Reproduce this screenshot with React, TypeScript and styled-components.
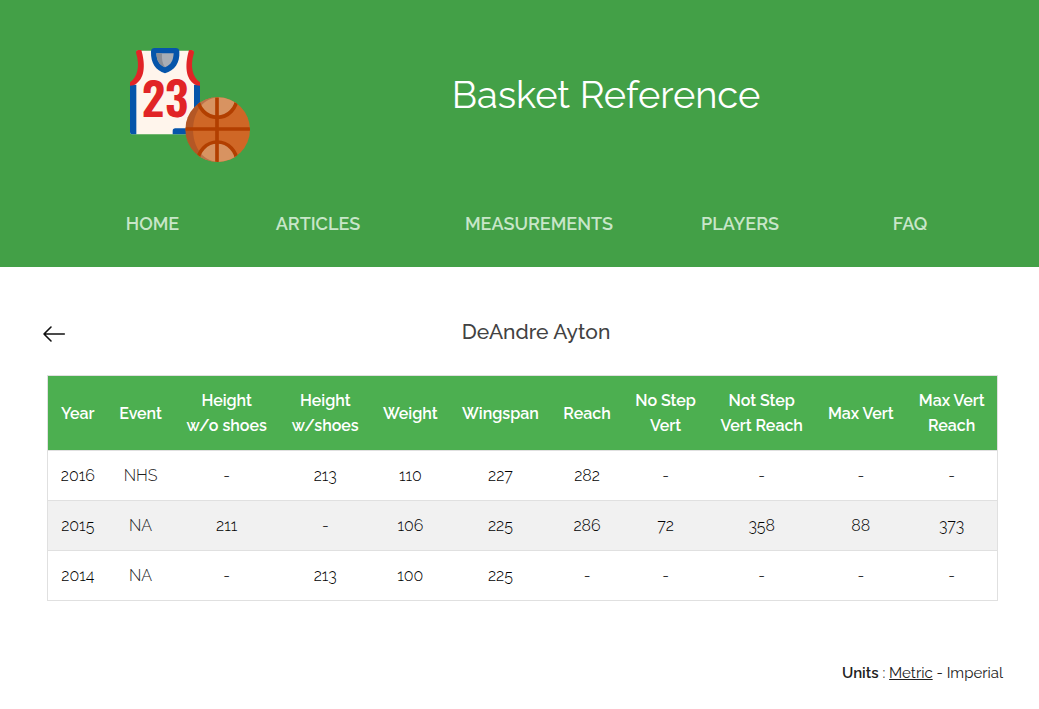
import React from "react";
import styled, { createGlobalStyle } from "styled-components";

const GlobalStyle = createGlobalStyle`
  *, *::before, *::after { box-sizing: border-box; }
  body {
    margin: 0;
    background: #fff;
    color: #212121;
    font-family: Raleway, Lato, "Open Sans", sans-serif;
    font-size: 16px;
    font-weight: 400;
    line-height: 25px;
  }
`;

const Header = styled.header`
  background: #43a047;
  padding: 48px 0 27px;
`;

const Brand = styled.div`
  display: grid;
  grid-template-columns: 380fr 452fr 207fr;
  justify-items: center;
`;

const LogoLink = styled.a`
  display: block;
  line-height: 0;
`;

const SiteTitle = styled.h1`
  margin: 0;
  padding-top: 23px;
  color: #fff;
  font-size: 38px;
  font-weight: 400;
  line-height: 48px;
  white-space: nowrap;
`;

const Nav = styled.nav`
  display: grid;
  grid-template-columns: 145fr 186fr 256fr 146fr 194fr;
  justify-items: center;
  margin-top: 46px;
  padding: 0 32px 0 80px;
`;

const NavLink = styled.a`
  color: #c8e6c9;
  font-size: 18px;
  font-weight: 600;
  line-height: 32px;
  text-decoration: none;
`;

const Main = styled.main`
  padding: 48px 36px 0 41px;
`;

const PlayerBar = styled.div`
  display: grid;
  grid-template-columns: 28px 1fr;
  align-items: end;
`;

const BackButton = styled.button`
  display: flex;
  align-items: center;
  height: 28px;
  padding: 0;
  border: 0;
  background: none;
  cursor: pointer;
`;

const PlayerName = styled.h2`
  margin: 0;
  color: #424242;
  font-size: 21px;
  font-weight: 500;
  line-height: 33px;
  text-align: center;
`;

const TableWrap = styled.div`
  margin: 27px 5px 0 6px;
`;

const Table = styled.table`
  width: 100%;
  table-layout: fixed;
  border: 1px solid #e0e0e0;
  border-collapse: collapse;
  text-align: center;
`;

const Column = styled.col<{ $share: number }>`
  width: ${(p) => (p.$share / 949) * 100}%;
`;

const HeadCell = styled.th`
  padding: 12px 0;
  background: #4caf50;
  color: #fff;
  font-weight: 600;
  white-space: pre-line;
`;

const Row = styled.tr`
  border-top: 1px solid #e0e0e0;
  &:nth-child(even) { background: #f1f1f1; }
`;

const Cell = styled.td<{ $soft?: boolean }>`
  height: 50px;
  padding: 0;
  color: ${(p) => (p.$soft ? "#212121" : "#000")};
  font-weight: 300;
`;

const Units = styled.p`
  margin: 60px 0 24px;
  font-size: 15px;
  text-align: right;
`;

const UnitsLabel = styled.span`
  font-weight: 600;
`;

const UnitLink = styled.a<{ $active?: boolean }>`
  color: inherit;
  text-decoration: ${(p) => (p.$active ? "underline" : "none")};
`;

const Logo = () => (
  <svg width="120" height="114" viewBox="30 24 360 342" aria-hidden="true">
    <path d="M50 32H220C204 70 205 112 240 134V283H38Q30 283 30 275V134C67 112 67 70 50 32Z" fill="#fff5ec" />
    <path d="M30 134H49V283H38Q30 283 30 275ZM222 134H240V220H222ZM166 265H206V283H158V273Q158 265 166 265Z" fill="#0655aa" />
    <path d="M48 38Q48 30 56 30H64C75 68 77 111 49 131Q43 137 30 137V127C52 111 61 80 48 38ZM222 38Q222 30 214 30H207C196 68 194 111 221 131Q227 137 240 137V127C218 111 209 80 222 38Z" fill="#e12426" />
    <path d="M104 24H167Q178 24 178 35C180 69 164 91 135 100C107 91 92 69 93 35Q93 24 104 24Z" fill="#0655aa" />
    <path d="M109 40H161C160 61 153 75 135 82C117 75 110 61 109 40Z" fill="#a8adb5" />
    <path d="M109 40H126C125 57 127 71 135 82C117 75 110 61 109 40Z" fill="#8a8e96" />
    <text x="135" y="232" textAnchor="middle" fill="#e12426" fontFamily='Oswald, "Roboto Condensed", "Liberation Sans", sans-serif' fontSize="138" fontWeight="600">23</text>
    <clipPath id="ball"><circle cx="293" cy="269" r="97" /></clipPath>
    <g clipPath="url(#ball)">
      <rect x="196" y="172" width="194" height="194" fill="#cf6726" />
      <ellipse cx="292" cy="171" rx="59" ry="60" fill="#d89361" />
      <ellipse cx="292" cy="367" rx="59" ry="60" fill="#d89361" />
      <path d="M293 172C195 180 195 358 293 366H196V172Z" fill="#893f25" opacity=".38" />
      <g fill="none" stroke="#b23f00" strokeWidth="11">
        <path d="M196 267H390M291 172V366" />
        <ellipse cx="292" cy="171" rx="59" ry="61" />
        <ellipse cx="292" cy="367" rx="59" ry="61" />
      </g>
    </g>
  </svg>
);

const BackArrow = () => (
  <svg width="26" height="18" viewBox="0 0 26 18" fill="none" stroke="#111" strokeWidth="1.6" strokeLinecap="round" strokeLinejoin="round" aria-hidden="true">
    <path d="M3 9H23.300M10 2L3 9L10 16" />
  </svg>
);

const links = ["Home", "Articles", "Measurements", "Players", "FAQ"];

const columns = [
  { label: "Year", share: 60 },
  { label: "Event", share: 66 },
  { label: "Height\nw/o shoes", share: 106 },
  { label: "Height\nw/shoes", share: 91 },
  { label: "Weight", share: 79 },
  { label: "Wingspan", share: 101 },
  { label: "Reach", share: 72 },
  { label: "No Step\nVert", share: 85 },
  { label: "Not Step\nVert Reach", share: 107 },
  { label: "Max Vert", share: 91 },
  { label: "Max Vert\nReach", share: 91 },
];

const rows = [
  ["2016", "NHS", "-", "213", "110", "227", "282", "-", "-", "-", "-"],
  ["2015", "NA", "211", "-", "106", "225", "286", "72", "358", "88", "373"],
  ["2014", "NA", "-", "213", "100", "225", "-", "-", "-", "-", "-"],
];

export default function App() {
  return (
    <>
      <GlobalStyle />
      <Header>
        <Brand>
          <LogoLink href="#" aria-label="Basket Reference home"><Logo /></LogoLink>
          <SiteTitle>Basket Reference</SiteTitle>
        </Brand>
        <Nav>
          {links.map((link) => (
            <NavLink key={link} href="#">{link.toUpperCase()}</NavLink>
          ))}
        </Nav>
      </Header>
      <Main>
        <PlayerBar>
          <BackButton type="button" aria-label="Back"><BackArrow /></BackButton>
          <PlayerName>DeAndre Ayton</PlayerName>
        </PlayerBar>
        <TableWrap>
          <Table>
            <colgroup>
              {columns.map((c) => <Column key={c.label} $share={c.share} />)}
            </colgroup>
            <thead>
              <tr>{columns.map((c) => <HeadCell key={c.label} scope="col">{c.label}</HeadCell>)}</tr>
            </thead>
            <tbody>
              {rows.map((row) => (
                <Row key={row[0]}>
                  {row.map((value, i) => <Cell key={i} $soft={i === 1}>{value}</Cell>)}
                </Row>
              ))}
            </tbody>
          </Table>
        </TableWrap>
        <Units>
          <UnitsLabel>Units</UnitsLabel> : <UnitLink href="#" $active>Metric</UnitLink> - <UnitLink href="#">Imperial</UnitLink>
        </Units>
      </Main>
    </>
  );
}
